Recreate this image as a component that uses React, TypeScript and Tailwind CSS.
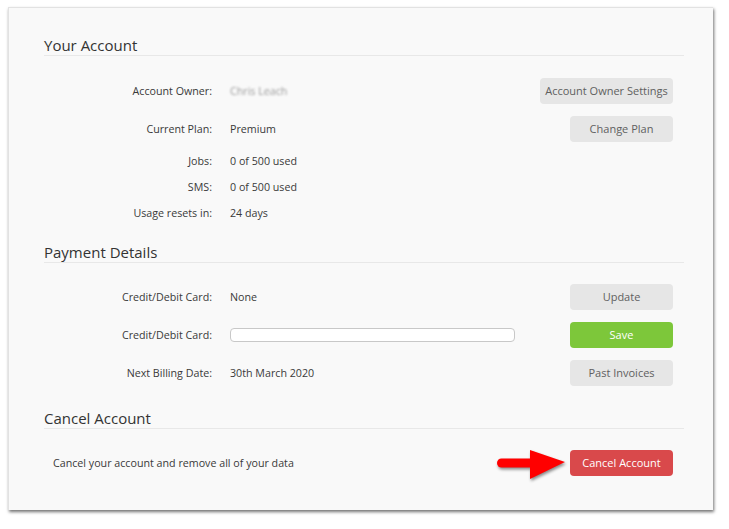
const base = "h-[26px] rounded-[4px] text-[11px] flex items-center justify-center";
const grey = `${base} bg-[#e6e6e6] text-[#606060]`;

function Heading({ children }: { children: string }) {
  return (
    <h2 className="text-[15px] leading-[19px] text-[#333] border-b border-[#e8e8e8]">{children}</h2>
  );
}

function Row({
  label,
  className,
  children,
  action,
}: {
  label: string;
  className: string;
  children?: React.ReactNode;
  action?: React.ReactNode;
}) {
  return (
    <div className={`flex items-center pr-[11px] ${className}`}>
      <div className="w-[168px] text-right text-[10.7px] text-[#3a3a3a]">{label}</div>
      <div className="flex-1 pl-[18px] text-[10.7px] text-[#3a3a3a] flex items-center">{children}</div>
      {action}
    </div>
  );
}

export default function App() {
  return (
    <div className="min-h-screen bg-white pt-[7px] pl-[8px] font-['Open_Sans',sans-serif]">
      {/* Settings panel */}
      <div className="w-[705px] h-[503px] bg-[#f9f9f9] border-l border-t border-[#e2e2e2] shadow-[1px_2px_3px_rgba(0,0,0,0.55)] pl-[35px] pr-[29px] pt-[28px]">
        <Heading>Your Account</Heading>
        <Row label="Account Owner:" className="mt-[22px] h-[26px]" action={<button className={`${grey} w-[133px]`}>Account Owner Settings</button>}>
          <span className="text-[#9a9a9a] blur-[1.3px]">Chris Leach</span>
        </Row>
        <Row label="Current Plan:" className="mt-[12px] h-[26px]" action={<button className={`${grey} w-[103px]`}>Change Plan</button>}>
          Premium
        </Row>
        <Row label="Jobs:" className="mt-[9px] h-[20px]">0 of 500 used</Row>
        <Row label="SMS:" className="mt-[6px] h-[20px]">0 of 500 used</Row>
        <Row label="Usage resets in:" className="mt-[6px] h-[20px]">24 days</Row>

        <div className="mt-[20px]">
          <Heading>Payment Details</Heading>
        </div>
        <Row label="Credit/Debit Card:" className="mt-[21px] h-[26px]" action={<button className={`${grey} w-[103px]`}>Update</button>}>
          None
        </Row>
        <Row
          label="Credit/Debit Card:"
          className="mt-[12px] h-[26px]"
          action={<button className={`${base} w-[103px] bg-[#7dc73a] text-white`}>Save</button>}
        >
          <input className="w-[285px] h-[14px] bg-white border border-[#c8c8c8] rounded-[4px] outline-none" />
        </Row>
        <Row label="Next Billing Date:" className="mt-[12px] h-[26px]" action={<button className={`${grey} w-[103px]`}>Past Invoices</button>}>
          30th March 2020
        </Row>

        <div className="mt-[23px]">
          <Heading>Cancel Account</Heading>
        </div>
        <div className="mt-[21px] h-[26px] flex items-center pl-[9px] pr-[11px]">
          <span className="text-[10.7px] text-[#3a3a3a]">Cancel your account and remove all of your data</span>
          <svg
            width="72"
            height="38"
            viewBox="0 0 72 38"
            className="ml-auto mr-[3px] overflow-visible drop-shadow-[1px_2px_1.5px_rgba(0,0,0,0.45)]"
          >
            <rect x="2" y="14.5" width="38" height="9" rx="4.5" fill="#ff0000" />
            <polygon points="35,6 70,18 35,35" fill="#ff0000" />
          </svg>
          <button className={`${base} w-[103px] bg-[#d9494b] text-white`}>Cancel Account</button>
        </div>
      </div>
    </div>
  );
}
